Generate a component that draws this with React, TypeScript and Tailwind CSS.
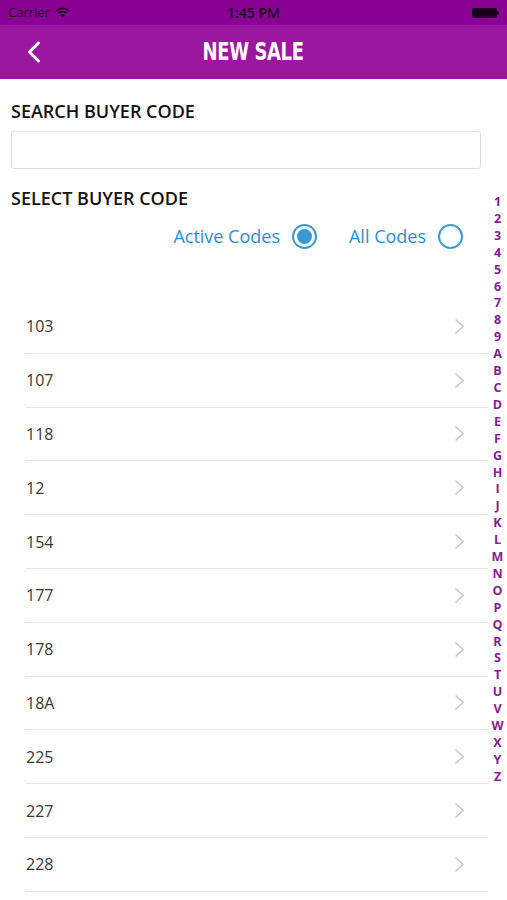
import { ChevronLeft } from "lucide-react"

const CODES = ["103", "107", "118", "12", "154", "177", "178", "18A", "225", "227", "228"]
const INDEX = "123456789ABCDEFGHIJKLMNOPQRSTUVWXYZ".split("")

function StatusBar() {
  return (
    <div className="h-[25px] bg-[#8a0095] flex items-center justify-between px-[8px] text-[13px] text-[#1a0020]">
      <div className="flex items-center gap-[5px] w-[120px]">
        <span>Carrier</span>
        <svg width="15" height="11" viewBox="0 0 15 11">
          <path d="M7.5 10.5 L5.2 8 A3.3 3.3 0 0 1 9.8 8 Z" fill="#1a0020" />
          <path d="M3.4 6.2 A5.9 5.9 0 0 1 11.6 6.2" stroke="#1a0020" strokeWidth="1.7" fill="none" />
          <path d="M1.2 3.9 A9 9 0 0 1 13.8 3.9" stroke="#1a0020" strokeWidth="1.7" fill="none" />
        </svg>
      </div>
      <span className="font-semibold text-[14px]">1:45 PM</span>
      <div className="w-[120px] flex justify-end">
        <div className="flex items-center">
          <div className="w-[25px] h-[10px] rounded-[2px] bg-[#1a0020]" />
          <div className="w-[2px] h-[4px] bg-[#1a0020] rounded-r-sm" />
        </div>
      </div>
    </div>
  )
}

function Radio({ label, checked }: { label: string; checked?: boolean }) {
  return (
    <div className="flex items-center gap-[12px]">
      <span className="text-[18px] text-[#2b8ede]">{label}</span>
      <div className="w-[25px] h-[25px] rounded-full border-[2px] border-[#3a9ad6] flex items-center justify-center">
        {checked && <div className="w-[15px] h-[15px] rounded-full bg-[#3a9ad6]" />}
      </div>
    </div>
  )
}

function Chevron() {
  return (
    <svg width="11" height="17" viewBox="0 0 11 17">
      <polyline points="1.5,1.5 9,8.5 1.5,15.5" fill="none" stroke="#c8c8c8" strokeWidth="1.6" />
    </svg>
  )
}

export default function App() {
  return (
    <div className="w-[507px] h-[900px] bg-white overflow-hidden" style={{ fontFamily: "'Open Sans', 'Noto Sans', sans-serif" }}>
      <StatusBar />
      <div className="h-[54px] bg-[#9c169f] flex items-center relative">
        <ChevronLeft className="absolute left-[16px] text-white" size={36} strokeWidth={2} />
        <div className="flex-1 text-center">
          <span
            className="inline-block text-white text-[25px] font-bold tracking-[-0.5px] scale-x-[0.8]"
            style={{ fontFamily: "'DejaVu Sans Condensed', 'Liberation Sans Narrow', sans-serif" }}
          >
            NEW SALE
          </span>
        </div>
      </div>
      <div className="flex">
        <div className="flex-1 flex flex-col">
          <div className="pl-[11px] pr-[7px]">
            <div className="mt-[20px] text-[18px] font-semibold text-[#111] leading-[24px]">SEARCH BUYER CODE</div>
            <div className="mt-[8px] h-[38px] border border-[#dedede] rounded-[3px]" />
            <div className="mt-[17px] text-[18px] font-semibold text-[#111] leading-[24px]">SELECT BUYER CODE</div>
            <div className="mt-[13px] flex justify-end gap-[32px] pr-[18px]">
              <Radio label="Active Codes" checked />
              <Radio label="All Codes" />
            </div>
          </div>
          <div className="mt-[50px] pl-[25px]">
            {CODES.map((c) => (
              <div key={c} className="h-[53.8px] flex items-center justify-between border-b border-[#e4e4e4] pr-[23px]">
                <span className="pl-[1px] text-[16px] text-[#383838]">{c}</span>
                <Chevron />
              </div>
            ))}
          </div>
        </div>
        <div className="w-[19px] pt-[115px] flex flex-col items-center">
          {INDEX.map((ch) => (
            <span key={ch} className="text-[12.5px] leading-[16.9px] font-bold text-[#8a1a9c]">
              {ch}
            </span>
          ))}
        </div>
      </div>
    </div>
  )
}
